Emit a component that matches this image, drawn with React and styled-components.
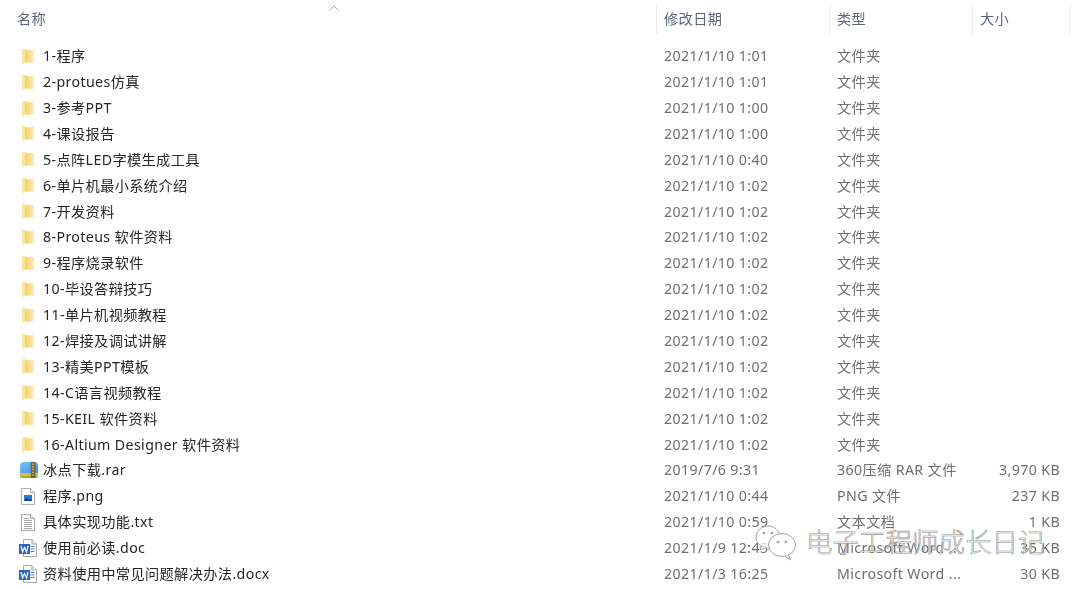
import React from 'react';
import styled, { createGlobalStyle } from 'styled-components';

const Global = createGlobalStyle`
  html, body {
    margin: 0;
    background: #fff;
  }
`;

const fontStack = `"Noto Sans", "Noto Sans CJK SC", sans-serif`;

const Page = styled.div`
  position: relative;
  width: 1080px;
  height: 589px;
  overflow: hidden;
  background: #fff;
  font-family: ${fontStack};
  font-size: 14.2px;
  line-height: 20px;
  letter-spacing: 0.38px;
`;

const Header = styled.div`
  display: grid;
  grid-template-columns: 657px 173px 143px 97px;
  height: 30px;
  margin-top: 4px;
  margin-bottom: 9.3px;
  filter: blur(0.25px);
`;

const HeadCell = styled.div`
  position: relative;
  display: flex;
  align-items: center;
  box-sizing: border-box;
  padding-left: 7px;
  color: #5b6678;
  border-right: 1.5px solid #ececec;
  &:first-child { padding-left: 17px; }
`;

const SortMark = styled.svg`
  position: absolute;
  left: 329px;
  top: 1px;
  width: 10px;
  height: 6px;
`;

const List = styled.div`
  display: flex;
  flex-direction: column;
  filter: blur(0.25px);
`;

const Row = styled.div`
  display: grid;
  grid-template-columns: 656px 173px 143px 88px;
  height: 25.9px;
  align-items: center;
  white-space: nowrap;
`;

const NameCell = styled.div`
  display: flex;
  align-items: center;
  padding-left: 18px;
  color: #262626;
`;

const IconBox = styled.span`
  display: flex;
  justify-content: center;
  width: 20px;
  margin-right: 5px;
`;

const DateCell = styled.div`
  padding-left: 8px;
  color: #6f6f6f;
`;

const TypeCell = styled.div`
  padding-left: 8px;
  color: #6f6f6f;
`;

const SizeCell = styled.div`
  text-align: right;
  color: #6f6f6f;
`;

const Watermark = styled.div`
  position: absolute;
  left: 755px;
  top: 522px;
  display: flex;
  align-items: center;
  gap: 9px;
`;

const WatermarkText = styled.span`
  font-family: "Noto Sans CJK SC", sans-serif;
  font-size: 26.5px;
  font-weight: 300;
  line-height: 38px;
  letter-spacing: 0;
  padding-bottom: 3px;
  color: rgba(255, 255, 255, 0.8);
  -webkit-text-stroke: 0.6px #909090;
  white-space: nowrap;
`;

const RarSvg = styled.svg`
  margin-left: 2px;
`;

const FolderIcon = () => (
  <svg width="12" height="17" viewBox="0 0 12 17">
    <defs>
      <linearGradient id="folderFill" x1="0" x2="1" y1="0" y2="0">
        <stop offset="0" stopColor="#f8cf68" />
        <stop offset="1" stopColor="#fdeab0" />
      </linearGradient>
    </defs>
    <path d="M0 1 L4 1 L5 2 L11.5 2 L11.5 14.5 L3 14.5 L0 16.5 Z" fill="#fbe3a0" />
    <path d="M3 2.5 L11.5 2.5 L11.5 14.5 L3 14.5 Z" fill="url(#folderFill)" />
  </svg>
);

const RarIcon = () => (
  <RarSvg width="20" height="18" viewBox="0 0 20 18">
    <defs>
      <linearGradient id="rarSky" x1="0" x2="1" y1="0" y2="1">
        <stop offset="0" stopColor="#7cc6f5" />
        <stop offset="1" stopColor="#2f8fe0" />
      </linearGradient>
    </defs>
    <path d="M0 4 Q0 0 4 0 L16 0 Q20 0 20 4 L20 13 L0 13 Z" fill="url(#rarSky)" />
    <path d="M0 13 L20 13 L20 15 L0 15 Z" fill="#f2a33a" />
    <path d="M0 15 L20 15 L20 16 Q20 18 18 18 L2 18 Q0 18 0 16 Z" fill="#7fbb3e" />
    <rect x="12" y="0" width="5" height="18" fill="#7d5f2a" />
    <path d="M13.5 2.5 H15.5 M13.5 5.5 H15.5 M13.5 8.5 H15.5 M13.5 11.5 H15.5 M13.5 14.5 H15.5" stroke="#e6cf96" strokeWidth="1.2" />
  </RarSvg>
);

const PngIcon = () => (
  <svg width="14" height="17" viewBox="0 0 14 17">
    <path d="M0.5 0.5 L9.5 0.5 L13.5 4.5 L13.5 16.5 L0.5 16.5 Z" fill="#fafafa" stroke="#b0b0b0" />
    <path d="M9.5 0.5 L9.5 4.5 L13.5 4.5" fill="#e6e6e6" stroke="#b0b0b0" />
    <rect x="3" y="7" width="8" height="6" fill="#2b78c8" />
    <path d="M3 13 L6 10 L8 12 L9.5 11 L11 13 Z" fill="#123f7c" />
  </svg>
);

const TxtIcon = () => (
  <svg width="14" height="17" viewBox="0 0 14 17">
    <path d="M0.5 0.5 L9.5 0.5 L13.5 4.5 L13.5 16.5 L0.5 16.5 Z" fill="#fcfcfc" stroke="#a9a9a9" />
    <path d="M9.5 0.5 L9.5 4.5 L13.5 4.5" fill="#e6e6e6" stroke="#a9a9a9" />
    <path d="M3 4.5 H8 M3 6.5 H11 M3 8.5 H11 M3 10.5 H11 M3 12.5 H11 M3 14.5 H11" stroke="#a8a8a8" strokeWidth="1" />
  </svg>
);

const WordIcon = () => (
  <svg width="18" height="18" viewBox="0 0 18 18">
    <path d="M4.5 0.5 L13 0.5 L17.5 5 L17.5 17.5 L4.5 17.5 Z" fill="#fbfbfb" stroke="#a9a9a9" />
    <path d="M13 0.5 L13 5 L17.5 5" fill="#e8e8e8" stroke="#a9a9a9" />
    <path d="M11.5 7.5 H15.5 M11.5 10 H15.5 M11.5 12.5 H15.5" stroke="#4f87c8" strokeWidth="1.1" />
    <rect x="0" y="5" width="11" height="10" fill="#2a66bd" />
    <path d="M2 7 L3.5 13 L5.5 8.5 L7.5 13 L9 7" fill="none" stroke="#fff" strokeWidth="1.2" />
  </svg>
);

const WeChatMark = () => (
  <svg width="42" height="40" viewBox="0 0 42 40" fill="none" stroke="#a0a0a0" strokeWidth="1">
    <path d="M25 12 C23 6 17 2 12 3 C5 4 1 9 1 14 C1 18 3 21 6 23 L5 27 L10 25 C11 25 12 26 14 26" fill="rgba(255,255,255,0.7)" />
    <ellipse cx="27" cy="22" rx="13.5" ry="11.5" fill="rgba(255,255,255,0.8)" />
    <path d="M33 32 L36 37 L30 33.5" fill="rgba(255,255,255,0.8)" />
    <circle cx="9" cy="10" r="1" fill="#a0a0a0" />
    <circle cx="17" cy="10" r="1" fill="#a0a0a0" />
    <circle cx="23" cy="19" r="1" fill="#a0a0a0" />
    <circle cx="31" cy="19" r="1" fill="#a0a0a0" />
  </svg>
);

const folder = (name, date) => ({ name, date, type: '文件夹', size: '', Icon: FolderIcon });

const files = [
  folder('1-程序', '2021/1/10 1:01'),
  folder('2-protues仿真', '2021/1/10 1:01'),
  folder('3-参考PPT', '2021/1/10 1:00'),
  folder('4-课设报告', '2021/1/10 1:00'),
  folder('5-点阵LED字模生成工具', '2021/1/10 0:40'),
  folder('6-单片机最小系统介绍', '2021/1/10 1:02'),
  folder('7-开发资料', '2021/1/10 1:02'),
  folder('8-Proteus 软件资料', '2021/1/10 1:02'),
  folder('9-程序烧录软件', '2021/1/10 1:02'),
  folder('10-毕设答辩技巧', '2021/1/10 1:02'),
  folder('11-单片机视频教程', '2021/1/10 1:02'),
  folder('12-焊接及调试讲解', '2021/1/10 1:02'),
  folder('13-精美PPT模板', '2021/1/10 1:02'),
  folder('14-C语言视频教程', '2021/1/10 1:02'),
  folder('15-KEIL 软件资料', '2021/1/10 1:02'),
  folder('16-Altium Designer 软件资料', '2021/1/10 1:02'),
  { name: '冰点下载.rar', date: '2019/7/6 9:31', type: '360压缩 RAR 文件', size: '3,970 KB', Icon: RarIcon },
  { name: '程序.png', date: '2021/1/10 0:44', type: 'PNG 文件', size: '237 KB', Icon: PngIcon },
  { name: '具体实现功能.txt', date: '2021/1/10 0:59', type: '文本文档', size: '1 KB', Icon: TxtIcon },
  { name: '使用前必读.doc', date: '2021/1/9 12:45', type: 'Microsoft Word ...', size: '35 KB', Icon: WordIcon },
  { name: '资料使用中常见问题解决办法.docx', date: '2021/1/3 16:25', type: 'Microsoft Word ...', size: '30 KB', Icon: WordIcon },
];

export default function App() {
  return (
    <Page>
      <Global />
      <Header>
        <HeadCell>
          名称
          <SortMark viewBox="0 0 10 6">
            <path d="M0.5 5.5 L5 1 L9.5 5.5" fill="none" stroke="#a8a8a8" strokeWidth="1" />
          </SortMark>
        </HeadCell>
        <HeadCell>修改日期</HeadCell>
        <HeadCell>类型</HeadCell>
        <HeadCell>大小</HeadCell>
      </Header>
      <List>
        {files.map(({ name, date, type, size, Icon }) => (
          <Row key={name}>
            <NameCell>
              <IconBox><Icon /></IconBox>
              {name}
            </NameCell>
            <DateCell>{date}</DateCell>
            <TypeCell>{type}</TypeCell>
            <SizeCell>{size}</SizeCell>
          </Row>
        ))}
      </List>
      <Watermark>
        <WeChatMark />
        <WatermarkText>电子工程师成长日记</WatermarkText>
      </Watermark>
    </Page>
  );
}
